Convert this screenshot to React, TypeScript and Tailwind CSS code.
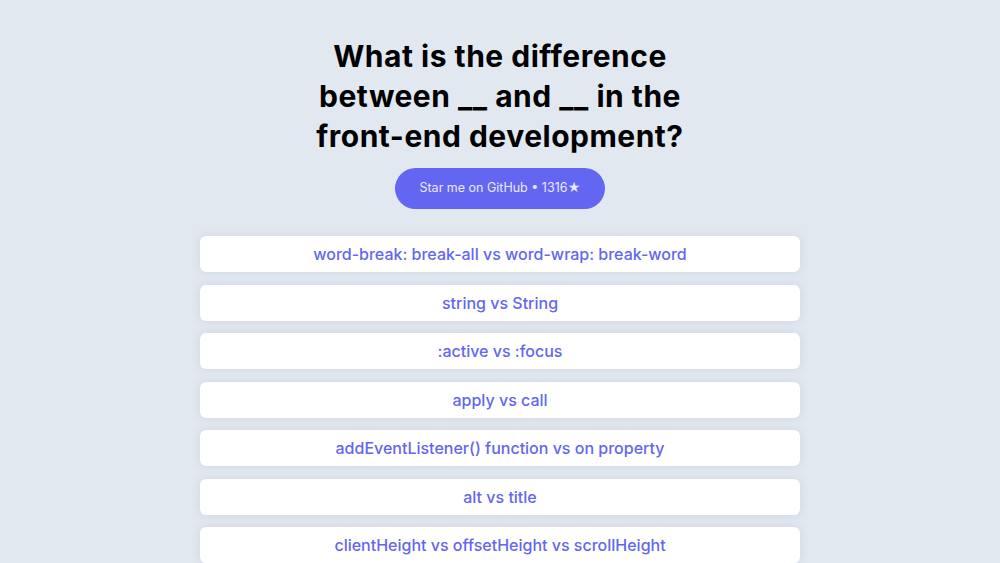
import React from "react";

const items = [
  "word-break: break-all vs word-wrap: break-word",
  "string vs String",
  ":active vs :focus",
  "apply vs call",
  "addEventListener() function vs on property",
  "alt vs title",
  "clientHeight vs offsetHeight vs scrollHeight",
];

export default function App() {
  return (
    <div
      className="min-h-screen bg-[#e2e8f0] flex flex-col items-center pt-[36px]"
      style={{ fontFamily: "Inter, 'Noto Sans', sans-serif" }}
    >
      <h1 className="text-[30px] leading-[40px] font-bold text-black text-center w-[420px] tracking-[0.5px]">
        What is the difference between __ and __ in the front-end development?
      </h1>
      <a className="mt-[12px] h-[41px] w-[210px] rounded-full bg-[#6366f1] text-[#e8e9ff] text-[12.5px] flex items-center justify-center">
        Star me on GitHub • 1316★
      </a>
      <div className="mt-[27px] w-[600px] flex flex-col gap-[12.5px]">
        {items.map((t) => (
          <div
            key={t}
            className="h-[36px] bg-white rounded-md shadow-[0_0_8px_rgba(100,116,139,0.15)] flex items-center justify-center text-[16px] font-medium text-[#6366f1]"
          >
            {t}
          </div>
        ))}
      </div>
    </div>
  );
}
